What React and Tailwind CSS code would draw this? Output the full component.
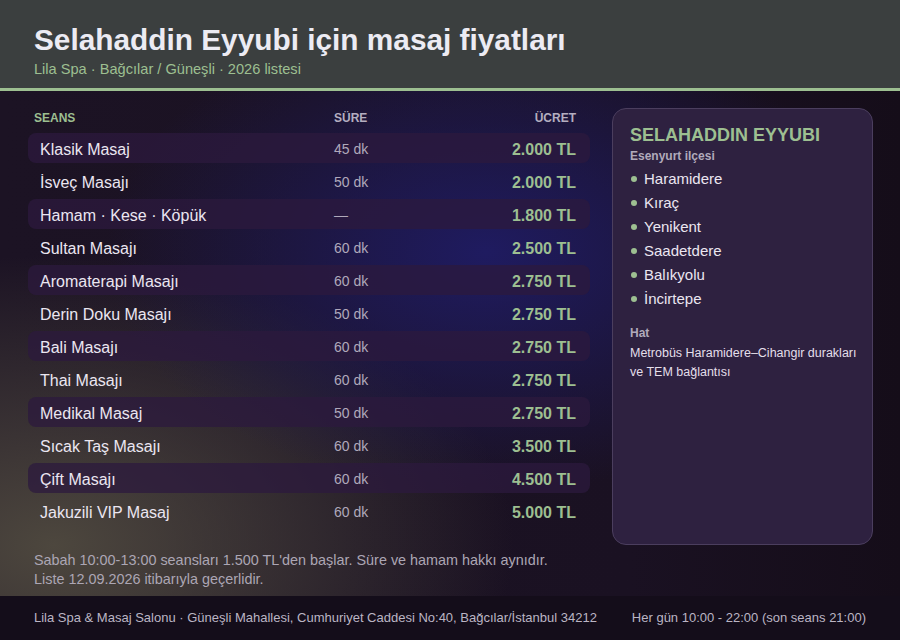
import React from "react";

const sessions = [
  { name: "Klasik Masaj", time: "45 dk", price: "2.000 TL" },
  { name: "İsveç Masajı", time: "50 dk", price: "2.000 TL" },
  { name: "Hamam · Kese · Köpük", time: "—", price: "1.800 TL" },
  { name: "Sultan Masajı", time: "60 dk", price: "2.500 TL" },
  { name: "Aromaterapi Masajı", time: "60 dk", price: "2.750 TL" },
  { name: "Derin Doku Masajı", time: "50 dk", price: "2.750 TL" },
  { name: "Bali Masajı", time: "60 dk", price: "2.750 TL" },
  { name: "Thai Masajı", time: "60 dk", price: "2.750 TL" },
  { name: "Medikal Masaj", time: "50 dk", price: "2.750 TL" },
  { name: "Sıcak Taş Masajı", time: "60 dk", price: "3.500 TL" },
  { name: "Çift Masajı", time: "60 dk", price: "4.500 TL" },
  { name: "Jakuzili VIP Masaj", time: "60 dk", price: "5.000 TL" }
];

const areas = ["Haramidere", "Kıraç", "Yenikent", "Saadetdere", "Balıkyolu", "İncirtepe"];

const App = () => {
  return (
    <div className="w-[900px] h-[640px] flex flex-col overflow-hidden bg-[#1a1120] font-['Liberation_Sans',Arial,sans-serif]">
      {/* header */}
      <header className="h-[91px] shrink-0 bg-[#3b3f3f] border-b-[3px] border-[#9dbf91] px-[34px] pt-[22px]">
        <h1 className="text-[29.8px] leading-[36px] font-bold text-[#ecebf3]">
          Selahaddin Eyyubi için masaj fiyatları
        </h1>
        <p className="text-[14.6px] leading-[18px] text-[#9dbf91] mt-[2px]">
          Lila Spa · Bağcılar / Güneşli · 2026 listesi
        </p>
      </header>

      {/* main */}
      <main className="flex-1 flex flex-col bg-[radial-gradient(ellipse_380px_240px_at_54%_32%,#1f1b60_0%,transparent_100%),radial-gradient(ellipse_460px_290px_at_6%_90%,#4d473e_0%,transparent_100%),linear-gradient(90deg,#1c1324_0%,#1a1122_70%,#150d19_100%)]">
        <div className="flex gap-[22px] pl-[28px] pr-[27px] pt-[17px]">
          {/* table */}
          <div className="w-[562px]">
            <div className="grid grid-cols-[300px_1fr_auto] pl-[6px] pr-[14px] h-[20px] items-center text-[12px] font-bold">
              <span className="text-[#9dbf91]">SEANS</span>
              <span className="text-[#b4aec0]">SÜRE</span>
              <span className="text-[#b4aec0]">ÜCRET</span>
            </div>
            <div className="flex flex-col gap-[3px] mt-[5px]">
              {sessions.map((s, i) => (
                <div
                  key={s.name}
                  className={
                    "grid grid-cols-[294px_1fr_auto] items-center h-[30px] pt-[3px] pl-[12px] pr-[14px] rounded-[8px] " +
                    (i % 2 === 0 ? "bg-[#2c1a3e]/75" : "")
                  }
                >
                  <span className="text-[16px] text-[#ebe6f1]">{s.name}</span>
                  <span className="text-[14px] text-[#b0a9bb]">{s.time}</span>
                  <span className="text-[16px] font-bold text-[#9dbf91]">{s.price}</span>
                </div>
              ))}
            </div>
          </div>

          {/* side card */}
          <aside className="w-[261px] h-[437px] rounded-[14px] bg-[#2e2140] border border-[#4b3e5e] pl-[17px] pr-[6px] pt-[16px]">
            <h2 className="text-[18px] leading-[20px] font-bold text-[#9dbf91]">SELAHADDIN EYYUBI</h2>
            <p className="text-[12px] leading-[16px] font-bold text-[#b1aabb] mt-[3px]">Esenyurt ilçesi</p>
            <ul className="mt-[3px]">
              {areas.map((a) => (
                <li key={a} className="flex items-center h-[24px] text-[15px] text-[#ebe6f1]">
                  <span className="w-[6px] h-[6px] rounded-full bg-[#9dbf91] ml-[1px] mr-[7px]" />
                  {a}
                </li>
              ))}
            </ul>
            <p className="text-[12px] leading-[16px] font-bold text-[#b1aabb] mt-[14px]">Hat</p>
            <p className="text-[12.5px] leading-[19px] text-[#e4dfea] mt-[3px]">
              Metrobüs Haramidere–Cihangir durakları ve TEM bağlantısı
            </p>
          </aside>
        </div>

        <div className="mt-auto px-[34px] pb-[7px] text-[14.4px] leading-[19px] text-[#aca6b4]">
          <p>Sabah 10:00-13:00 seansları 1.500 TL'den başlar. Süre ve hamam hakkı aynıdır.</p>
          <p>Liste 12.09.2026 itibarıyla geçerlidir.</p>
        </div>
      </main>

      {/* footer */}
      <footer className="h-[44px] shrink-0 bg-[#140d1a] px-[34px] flex items-center justify-between text-[13px] text-[#bbb5c4]">
        <span>Lila Spa &amp; Masaj Salonu · Güneşli Mahallesi, Cumhuriyet Caddesi No:40, Bağcılar/İstanbul 34212</span>
        <span>Her gün 10:00 - 22:00 (son seans 21:00)</span>
      </footer>
    </div>
  );
};

export default App;
